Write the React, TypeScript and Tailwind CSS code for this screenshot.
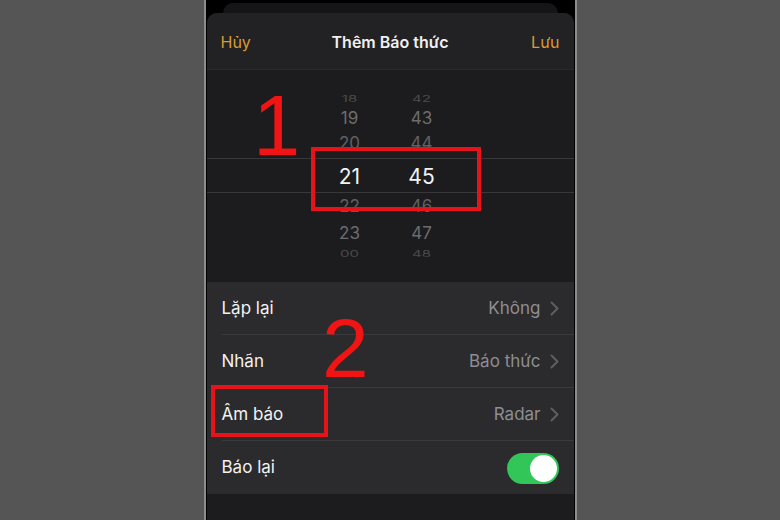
import React from "react";

const font = { fontFamily: "Inter, 'Noto Sans', sans-serif" };

function Chevron() {
  return (
    <svg width="9" height="15" viewBox="0 0 9 15" className="ml-[9px]">
      <polyline points="1.5,1.5 7.5,7.5 1.5,13.5" fill="none" stroke="#5f5f63" strokeWidth="2" strokeLinecap="round" strokeLinejoin="round" />
    </svg>
  );
}

function Row({ label, value, last, toggle }: { label: string; value?: string; last?: boolean; toggle?: boolean }) {
  return (
    <div className="h-[53px] pl-[15px] flex">
      <div className={`flex-1 flex items-center pt-[1px] pr-[15px] ${last ? "" : "border-b border-[#3a3a3c]"}`}>
        <span className="text-[17px] text-[#f2f2f2] flex-1">{label}</span>
        {value && (
          <>
            <span className="text-[17px] text-[#8e8e93]">{value}</span>
            <Chevron />
          </>
        )}
        {toggle && (
          <div className="w-[52px] h-[31px] rounded-full bg-[#32c558] flex items-center justify-end p-[2px]">
            <div className="w-[27px] h-[27px] rounded-full bg-white" />
          </div>
        )}
      </div>
    </div>
  );
}

function PickRow({ h, m, cls, height, extra }: { h: string; m: string; cls: string; height: string; extra?: string }) {
  return (
    <div className={`flex items-center pl-[113px] ${height} ${extra ?? ""}`}>
      <span className={`w-[60px] text-center ${cls}`}>{h}</span>
      <span className="w-[12px]" />
      <span className={`w-[60px] text-center ${cls}`}>{m}</span>
    </div>
  );
}

export default function App() {
  return (
    <div className="relative w-[780px] h-[520px] bg-[#555555] flex justify-center overflow-hidden" style={font}>
      <div className="w-[373px] h-[520px] border-x-2 border-[#8c8c8c] bg-black flex flex-col">
        <div className="h-[13px] flex flex-col justify-end px-[17px]">
          <div className="h-[10px] rounded-t-[10px] bg-[#151517]" />
        </div>
        <div className="flex-1 rounded-t-[10px] bg-[#1c1c1e] flex flex-col overflow-hidden mx-[1px]">
          <div className="h-[57px] pt-[1px] bg-[#222224] border-b border-[#2a2a2c] flex items-center px-[14px]">
            <span className="text-[16px] text-[#d99b34] w-[60px]">Hủy</span>
            <span className="flex-1 text-center text-[16px] font-semibold text-[#f0f0f0]">Thêm Báo thức</span>
            <span className="text-[16px] text-[#d99b34] w-[60px] text-right">Lưu</span>
          </div>
          <div className="h-[212px] bg-[#1c1c1e] flex flex-col pt-[19px]">
            <PickRow h="18" m="42" height="h-[20px]" cls="text-[15px] text-[#4a4a4c] scale-y-[0.55]" />
            <PickRow h="19" m="43" height="h-[20px]" cls="text-[17px] text-[#6c6c6e]" />
            <PickRow h="20" m="44" height="h-[29px]" cls="text-[17px] text-[#606062]" />
            <PickRow h="21" m="45" height="h-[35px]" extra="border-y border-[#38383a] pt-[2px]" cls="text-[21px] text-[#f2f2f2]" />
            <PickRow h="22" m="46" height="h-[28px]" cls="text-[17px] text-[#606062]" />
            <PickRow h="23" m="47" height="h-[25px]" cls="text-[17px] text-[#6c6c6e]" />
            <PickRow h="00" m="48" height="h-[16px]" cls="text-[15px] text-[#4a4a4c] scale-y-[0.55]" />
          </div>
          <div className="bg-[#2b2b2d] flex flex-col">
            <Row label="Lặp lại" value="Không" />
            <Row label="Nhãn" value="Báo thức" />
            <Row label="Âm báo" value="Radar" />
            <Row label="Báo lại" toggle last />
          </div>
          <div className="flex-1 bg-[#1c1c1e]" />
        </div>
      </div>

      {/* annotations */}
      <div className="absolute left-[311px] top-[147px] w-[170px] h-[64px] border-[4px] border-[#e8121a]" />
      <div className="absolute left-[211px] top-[385px] w-[117px] h-[52px] border-[4px] border-[#e8121a]" />
      <div className="absolute left-[253px] top-[83px] text-[85px] leading-none text-[#f01414]" style={{ fontFamily: "'Liberation Sans', Arial, sans-serif" }}>1</div>
      <div className="absolute left-[322px] top-[306px] text-[84px] leading-none text-[#f01414]" style={{ fontFamily: "'Liberation Sans', Arial, sans-serif" }}>2</div>
    </div>
  );
}
